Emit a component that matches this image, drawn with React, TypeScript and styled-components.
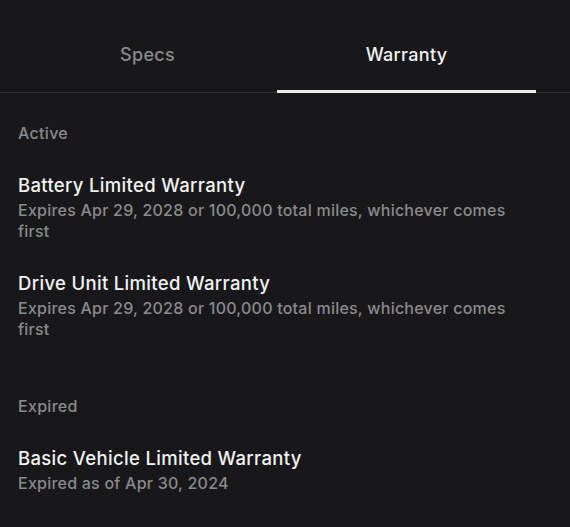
import styled, { createGlobalStyle } from "styled-components";

const GlobalStyle = createGlobalStyle`
  html, body {
    margin: 0;
    padding: 0;
    background: #18181a;
  }
  body {
    font-family: Inter, "Noto Sans", sans-serif;
    -webkit-font-smoothing: antialiased;
  }
`;

const Page = styled.div`
  width: 570px;
  min-height: 527px;
  background: #18181a;
  color: #f2f2f2;
`;

const TabBar = styled.div`
  display: flex;
  padding: 0 34px 0 18px;
  border-bottom: 1px solid #2c2c2e;
`;

const Tab = styled.div<{ $active?: boolean }>`
  flex: 1;
  height: 93px;
  box-sizing: border-box;
  padding-top: 20px;
  margin-bottom: -1px;
  display: flex;
  align-items: center;
  justify-content: center;
  font-size: 18px;
  line-height: 24px;
  font-weight: 500;
  letter-spacing: 0.3px;
  color: ${(p) => (p.$active ? "#f2f2f2" : "#8a8a8c")};
  border-bottom: 3px solid ${(p) => (p.$active ? "#ececec" : "transparent")};
`;

const Content = styled.div`
  padding: 29px 34px 0 18px;
`;

const Section = styled.section`
  & + & {
    padding-top: 26px;
  }
`;

const SectionLabel = styled.div`
  font-size: 16px;
  line-height: 22px;
  font-weight: 500;
  letter-spacing: 0.3px;
  color: #8a8a8c;
  margin-bottom: 29px;
`;

const Item = styled.div`
  margin-bottom: 29px;
`;

const ItemTitle = styled.div`
  font-size: 18.5px;
  line-height: 24px;
  font-weight: 500;
  letter-spacing: 0.33px;
  color: #f2f2f2;
  margin-bottom: 3px;
`;

const ItemText = styled.div`
  font-size: 16px;
  line-height: 21px;
  font-weight: 500;
  letter-spacing: 0.23px;
  color: #8a8a8c;
`;

const warranties = [
  {
    group: "Active",
    items: [
      {
        title: "Battery Limited Warranty",
        text: "Expires Apr 29, 2028 or 100,000 total miles, whichever comes first",
      },
      {
        title: "Drive Unit Limited Warranty",
        text: "Expires Apr 29, 2028 or 100,000 total miles, whichever comes first",
      },
    ],
  },
  {
    group: "Expired",
    items: [
      {
        title: "Basic Vehicle Limited Warranty",
        text: "Expired as of Apr 30, 2024",
      },
    ],
  },
];

export default function App() {
  return (
    <Page>
      <GlobalStyle />
      <TabBar>
        <Tab>Specs</Tab>
        <Tab $active>Warranty</Tab>
      </TabBar>
      <Content>
        {warranties.map((g) => (
          <Section key={g.group}>
            <SectionLabel>{g.group}</SectionLabel>
            {g.items.map((it) => (
              <Item key={it.title}>
                <ItemTitle>{it.title}</ItemTitle>
                <ItemText>{it.text}</ItemText>
              </Item>
            ))}
          </Section>
        ))}
      </Content>
    </Page>
  );
}
